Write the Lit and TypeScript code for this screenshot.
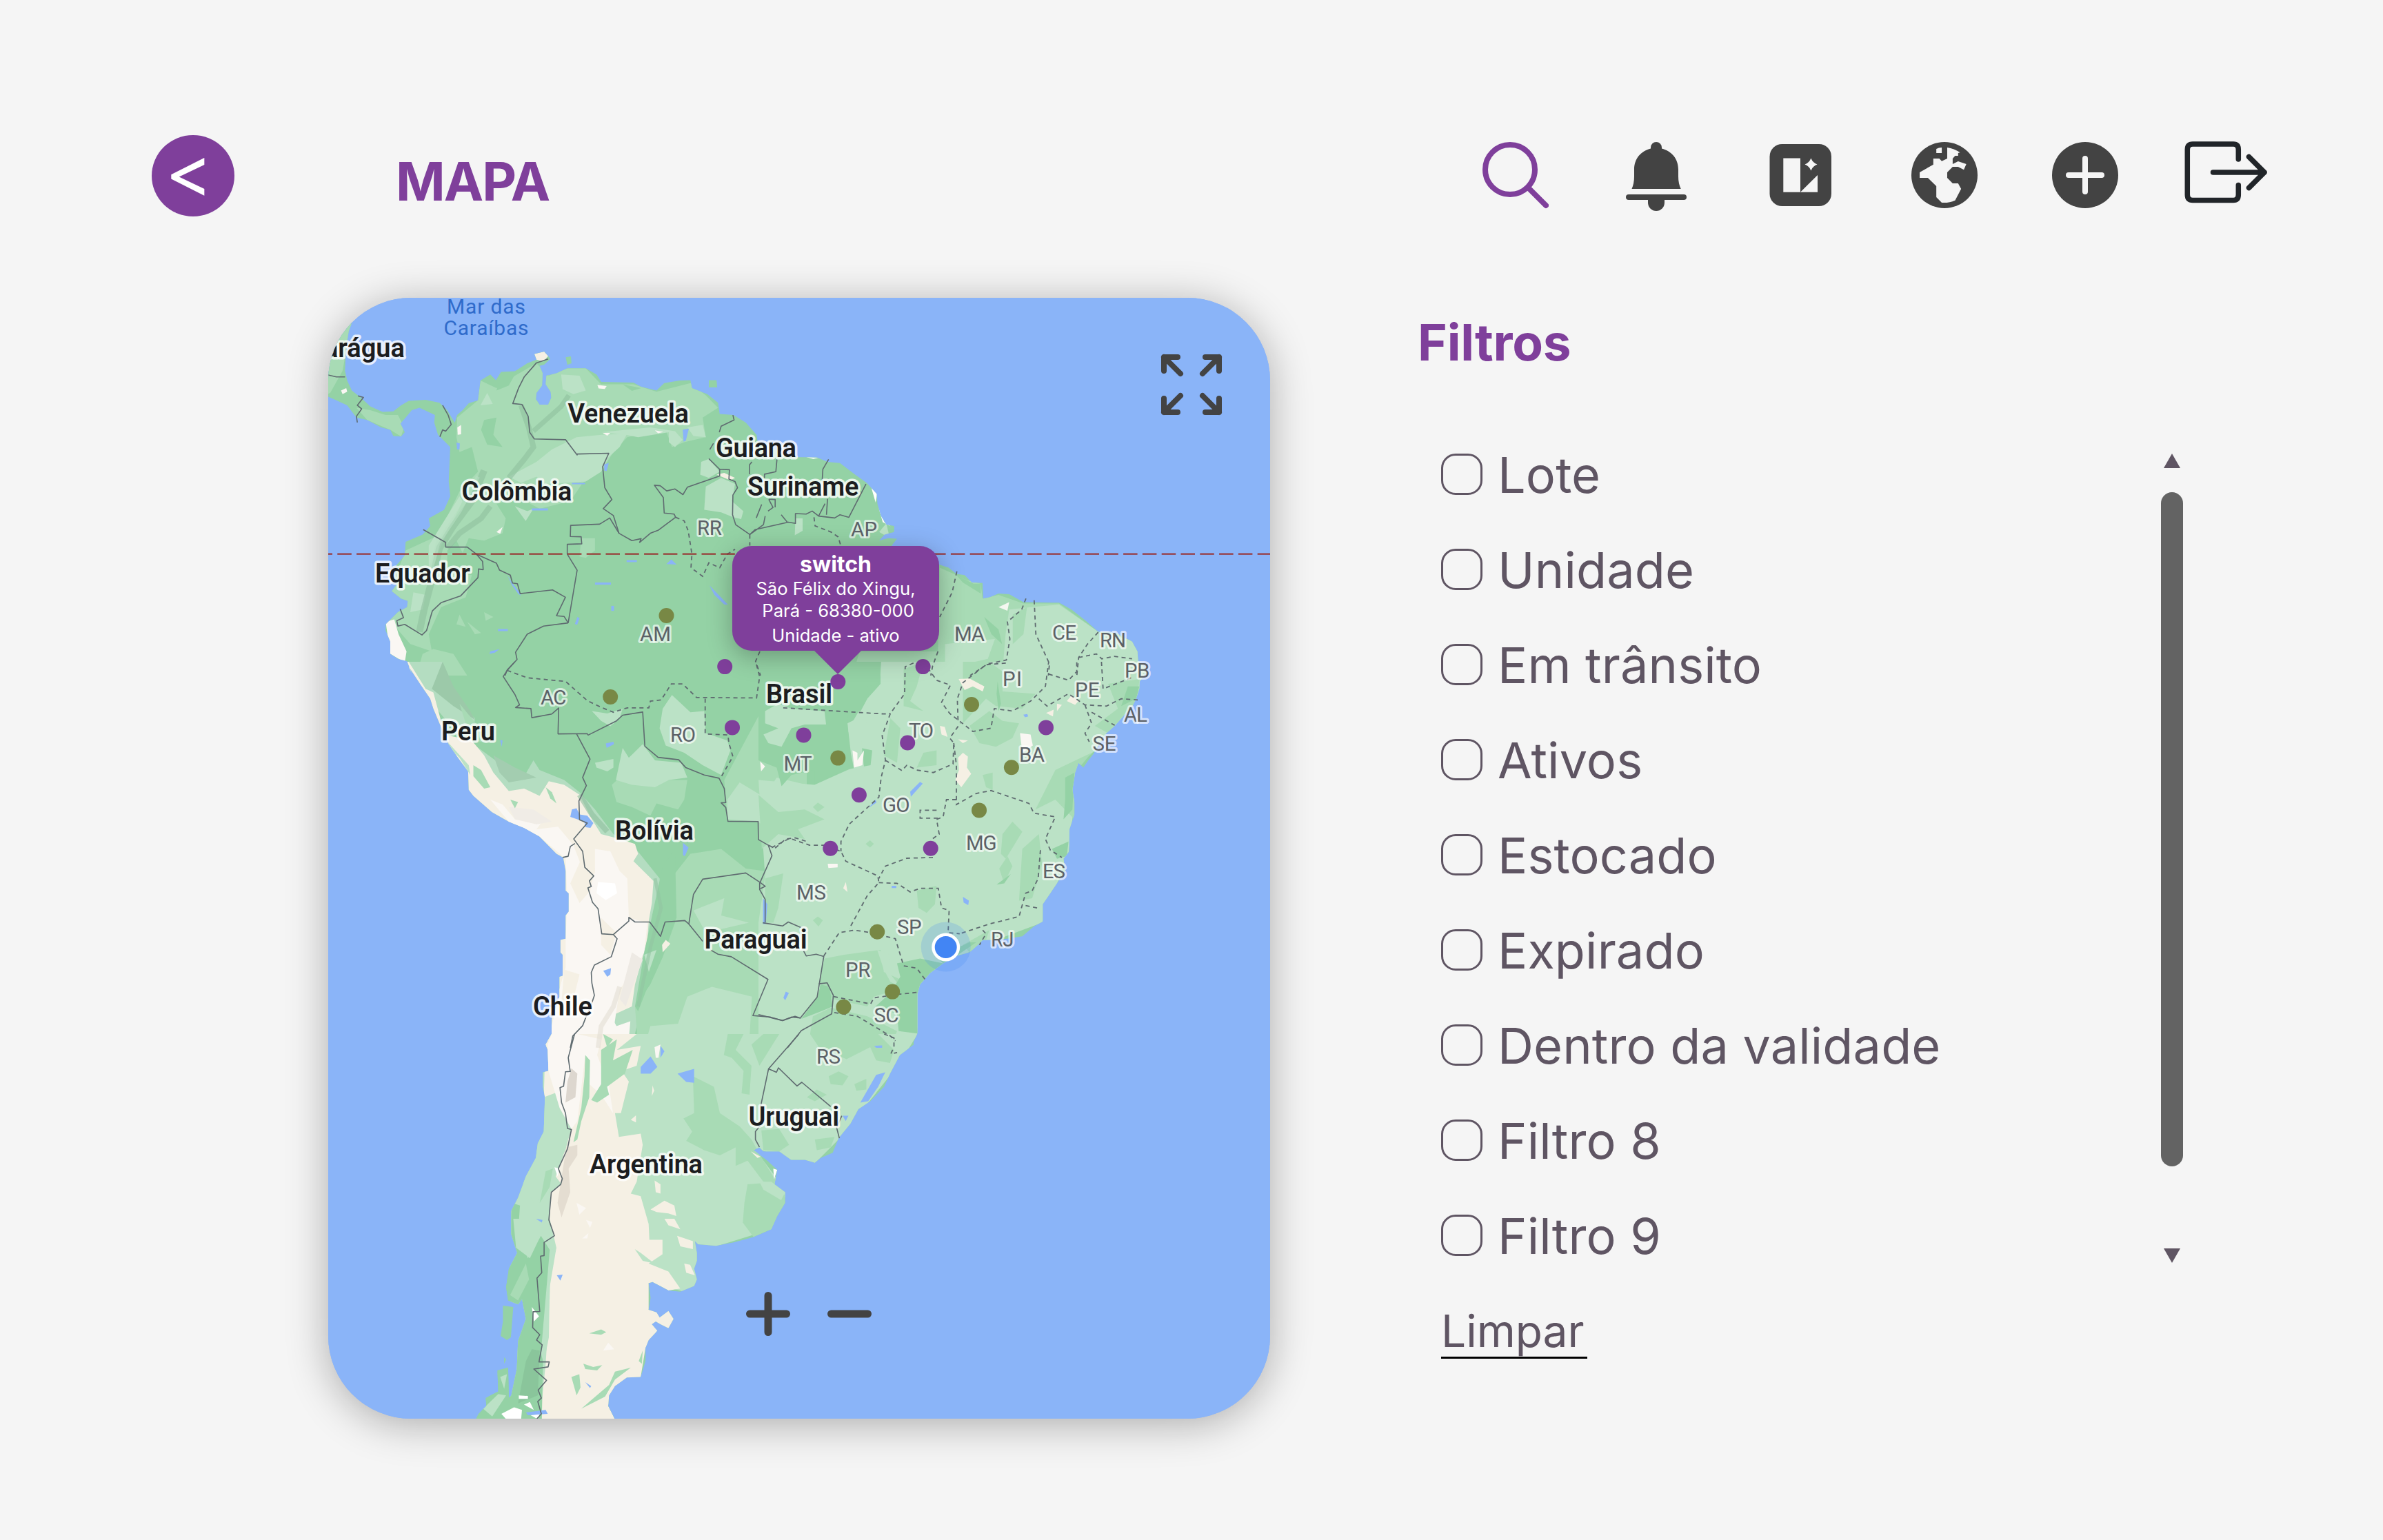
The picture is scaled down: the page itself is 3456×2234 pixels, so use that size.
import { LitElement, html, svg, css } from "lit";
import { customElement } from "lit/decorators.js";

/* ---------- map geometry ---------- */

// Every map sheet has an origin and a scale that lead to page units.
type Sheet = (points: string) => string;
const sheet =
  (ox: number, oy: number, sx: number, sy: number): Sheet =>
  (points) =>
    points
      .trim()
      .split(/\s+/)
      .map((p) => {
        const [x, y] = p.split(",").map(Number);
        return `${(ox + x * sx).toFixed(1)},${(oy + y * sy).toFixed(1)}`;
      })
      .join(" ");

const nw = sheet(470, 420, 0.44643, 0.35714);
const ne = sheet(1040, 420, 0.51658, 0.35714);
const we = sheet(470, 960, 0.44643, 0.35714);
const ea = sheet(1100, 960, 0.4783, 0.35714);
const so = sheet(470, 1500, 0.57398, 0.38265);

const DARK = "#94d2a5";
const MID = "#a8dbb5";
const LIGHT = "#bbe2c6";
const SAND = "#f5f0e4";
const SNOW = "#faf7f3";
const SEA = "#8ab4f8";

const coast = [
  nw(`0,120 90,135 80,170 75,210 70,260 68,330 75,370 90,410 120,440 150,475 190,497 225,495 250,470 275,452 330,448 375,460 400,490 412,515 425,540 432,510 450,490 470,462 500,450 508,370 540,345 558,368 575,335 620,332 660,300 690,285 683,262 715,252 728,270 735,282 715,305 700,310 710,340 708,390 690,420 688,445 700,468 728,468 738,440 736,415 720,385 722,350 755,340 790,320 850,320 885,345 900,375 1005,378 1030,395 1080,410 1105,380 1155,370 1190,368 1195,400 1245,425 1280,460 1285,505 1330,510 1370,540 1405,590`),
  ne(`113,615 150,640 200,680 280,682 310,700 345,705 390,755 420,785 448,830 450,870 460,920 475,955 497,960 497,985 470,995 455,1020 480,1010 505,1012 490,1040 540,1070 625,1118 650,1130 672,1155 695,1160 715,1190 745,1192 747,1255 765,1250 790,1235 820,1238 860,1270 960,1272 995,1300 1035,1345 1070,1390 1120,1395 1165,1430 1180,1470 1182,1510`),
  ea(`1165,10 1178,40 1156,80 1155,110 1145,150 1130,190 1110,215 1080,260 1055,290 1030,340 1015,375 1000,400 985,430 970,410 960,450 952,520 958,570 958,620 943,680 942,770 925,800 930,850 900,910 862,985 862,1055 835,1075 800,1115 730,1130 680,1130 665,1150 640,1180 600,1195 560,1225 520,1265 490,1310 482,1350 482,1510 470,1545`),
  so(`1490,40 1455,80 1430,150 1415,200 1380,255 1350,285 1330,340 1300,395 1285,450 1255,470 1240,488 1215,477 1180,477 1150,445 1110,445 1100,430 1085,440 1120,480 1145,515 1138,570 1165,600 1165,640 1145,690 1130,740 1085,770 1035,790 990,803 945,797 937,785 942,830 942,860 935,890 942,930 935,955 900,977 870,972 830,940 820,945 825,1000 820,1045 840,1055 848,1075 870,1050 883,1080 870,1115 850,1100 838,1090 828,1100 842,1125 820,1160 812,1190 812,1240 800,1300 765,1302 735,1335 720,1370 718,1410 738,1470 380,1470 390,1440 410,1410 408,1380 440,1355 438,1275 465,1265 467,1380 473,1370 487,1270 490,1165 510,1080 500,1005 490,1025 465,1010 460,960 467,890 488,830 473,760 473,670 490,620 510,540 535,470 540,415 555,370 558,240 553,200 553,145 567,140 565,60 560,40 575,0`),
  we(`740,1450 765,1360 765,1280 775,1275 775,1190 768,1180 768,1130 785,1125 785,1030 795,1015 795,940 785,930 785,850 777,795 755,780 700,710 650,675 600,650 545,610 485,545 470,520 468,445 435,390 405,335 375,250 355,190 345,150 315,95 275,20`),
  nw(`285,1560 270,1510 240,1500 215,1480 215,1430 200,1385 200,1360 240,1310 270,1290 272,1265 250,1255 220,1225 235,1200 228,1180 235,1120 262,1080 265,1025 320,995 345,960 340,930 390,895 410,840 405,780 410,640 370,590 358,540 360,510 310,480 285,490 265,520 248,545 262,580 250,597 225,595 215,570 185,560 140,530 105,520 75,470 40,450 0,428`),
].join(" ");

const isles = [
  nw("785,275 802,272 804,300 790,306"),
  nw("1250,368 1275,368 1277,398 1250,398"),
  so("452,1030 478,1035 472,1150 462,1160 446,1145 452,1090"),
  so("455,1225 460,1235 455,1250"),
];

const patches: [string, string][] = [
  // north-west highlands
  [MID, nw(`0,120 90,140 70,260 60,330 20,420 0,430`)],
  [MID, nw(`105,480 150,490 200,510 240,510 260,560 250,597 215,570 140,530`)],
  [SNOW, nw(`55,410 72,400 75,415 60,425`)],
  [MID, nw(`430,600 432,520 500,450 508,370 560,400 620,350 690,300 730,350 790,320 850,320 900,385 1005,385 1080,415 1190,380 1240,430 1280,480 1230,520 1240,600 1170,620 1130,640 1110,570 1060,580 985,600 940,660 900,740 840,785 800,860 700,890 640,850 560,870 590,930 580,990 520,1020 470,1010 450,1070 430,1020 400,1060 400,1150 480,1160 460,1250 380,1290 340,1400 350,1470 280,1440 210,1340 215,1220 265,1060 370,1000 440,820 500,740 480,640 440,660`)],
  [DARK, nw(`520,530 560,520 550,590 580,640 530,630 510,570`)],
  [DARK, nw(`575,340 620,345 600,390 560,410`)],
  [DARK, nw(`970,385 1030,400 1000,412`)],
  [LIGHT, nw(`600,760 690,700 740,650 820,600 900,590 985,585 960,640 925,680 900,740 850,780 720,790 690,760 640,785`)],
  [LIGHT, nw(`770,345 830,350 850,410 810,425 775,405`)],
  [LIGHT, nw(`508,470 530,420 548,465`)],
  [LIGHT, nw(`620,880 660,900 680,890 655,940`)],
  [LIGHT, nw(`900,580 1060,560 1140,575 1165,610 1140,640 1120,620 1120,580 1020,600 980,590`)],
  [LIGHT, nw(`1180,560 1230,550 1240,600 1200,595`)],
  [SNOW, nw(`888,388 918,392 912,404 892,402`)],
  [SNOW, nw(`905,582 930,582 920,594`)],
  [SNOW, nw(`1075,572 1102,578 1085,584`)],
  [SNOW, nw(`433,560 445,550 445,588 434,590`)],
  [SNOW, nw(`560,985 580,965 572,992`)],
  [LIGHT, nw(`1240,800 1290,765 1335,790 1325,860 1362,900 1355,932 1330,925 1290,905 1235,895`)],
  [LIGHT, nw(`1225,700 1250,688 1285,740 1250,765 1222,752`)],
  [SAND, nw(`1275,752 1300,745 1335,765 1320,775`)],
  [MID, nw(`835,1010 880,1010 880,1060 850,1090 830,1085`)],
  [MID, nw(`430,1360 440,1320 460,1370`)],
  [MID, nw(`520,1310 550,1330 525,1345`)],
  [MID, nw(`465,1350 510,1395 490,1400`)],
  [MID, nw(`355,1460 420,1480 465,1568 300,1568 320,1480`)],
  [SAND, nw(`683,262 715,252 728,270 712,292 690,285`)],
  [SNOW, nw(`200,1350 228,1340 242,1400 268,1470 262,1515 215,1480`)],
  [LIGHT, nw(`340,1040 420,880 440,840 450,860 380,1040 340,1170`)],
  [LIGHT, nw(`290,1230 330,1240 320,1300 280,1310`)],
  // north coast
  [LIGHT, ne(`455,985 475,950 485,1010`)],
  [LIGHT, ne(`220,930 240,930 240,980 218,998`)],
  ["#ffffff", ne(`432,800 450,825 445,865 438,830`)],
  ["#ffffff", ne(`453,885 470,945 488,962 465,945`)],
  ["#ffffff", ne(`250,680 285,683 270,688`)],
  [MID, ne(`625,1130 672,1160 700,1180 740,1195 745,1255 790,1240 860,1275 960,1275 1070,1390 1180,1430 1185,1568 380,1568 400,1470 620,1470`)],
  [DARK, ne(`672,1160 720,1195 740,1195 740,1235 690,1190`)],
  [LIGHT, ne(`820,1300 880,1290 960,1280 1070,1390 1180,1430 1185,1568 800,1568 810,1400`)],
  [LIGHT, ne(`640,1440 780,1420 760,1500 640,1540`)],
  [MID, ne(`830,1320 870,1290 860,1400 830,1440`)],
  [DARK, ne(`750,1330 790,1380 800,1440 770,1400`)],
  ["#f4f7f0", ne(`790,1290 820,1270 815,1305`)],
  // western slope and altiplano
  ["#b4ddc1", we(`240,0 385,0 400,80 440,170 490,230 480,330 545,390 600,440 655,455 680,400 700,440 780,480 830,530 880,600 940,700 1000,740 1090,880 1100,1000 1060,1180 1030,1400 1000,1568 600,1568 700,700`)],
  ["#9cc9a9", we(`385,0 420,100 470,190 490,235 420,180 350,110`)],
  ["#a3cdb0", we(`550,380 620,430 690,470 600,490 570,450`)],
  [MID, we(`440,170 500,260 530,330 490,320 460,250`)],
  [SAND, we(`240,0 275,0 330,110 355,125 380,240 405,300 480,320 520,380 550,450 600,525 650,515 700,545 730,485 780,500 830,540 870,640 900,700 960,720 1010,740 1020,780 1005,810 1070,890 1065,980 1055,1050 1050,1130 1030,1220 1010,1310 1000,1400 930,1440 920,1500 900,1568 600,1568 600,700 300,400`)],
  [LIGHT, we(`385,300 405,330 470,420 475,460 440,390 400,340`)],
  [SNOW, we(`540,560 580,580 620,640 705,655 690,680 760,670 810,745 845,860 880,860 880,760 930,770 960,850 985,880 990,1040 1050,1060 1040,1180 1005,1260 960,1330 940,1500 900,1568 720,1568 745,1450 760,1350 785,1240 785,1130 790,960 785,800 700,710 600,650`)],
  ["#ffffff", we(`890,895 945,900 952,940 915,968 885,940`)],
  [SAND, we(`780,1250 830,1270 810,1370 770,1400`)],
  [SAND, we(`850,760 880,840 865,930 830,980 800,900`)],
  [SAND, we(`900,1040 950,1100 930,1190 900,1150`)],
  ["#eeeae4", we(`1000,1180 1035,1210 1000,1330 980,1400 960,1370`)],
  ["#f0ece6", we(`600,590 680,600 740,650 690,660 620,640`)],
  [MID, we(`485,420 510,440 540,510 520,515 485,465`)],
  [MID, we(`605,560 630,570 620,595`)],
  [MID, we(`720,510 740,530 755,575 735,555`)],
  [LIGHT, we(`870,200 920,210 970,190 960,230 930,262 900,240`)],
  // Bolivia
  [MID, we(`935,500 960,470 1090,480 1180,480 1170,560 1150,600 1080,575 1060,625 1000,590 950,570`)],
  [LIGHT, we(`880,410 940,395 940,430 920,445 885,430`)],
  [LIGHT, we(`948,480 970,350 990,390 1035,335 1075,400 1160,410 1180,470 1120,480 1075,510 1000,500`)],
  [LIGHT, we(`1100,190 1130,135 1190,205 1235,200 1240,290 1310,320 1320,360 1290,460 1230,420 1170,370 1110,340 1090,270`)],
  [MID, we(`1140,860 1190,780 1290,760 1370,840 1430,850 1415,900 1430,1060 1500,1060 1568,1100 1568,1568 1020,1568 1010,1400 1060,1310 1100,1200 1140,1060`)],
  [DARK, we(`1100,830 1140,760 1145,1040 1100,1150 1070,1260 1020,1420 1010,1400 1040,1180`)],
  [SAND, we(`1098,1150 1110,1130 1125,1145 1100,1180`)],
  [LIGHT, we(`1200,1010 1300,960 1290,1030 1380,1060 1240,1100`)],
  [LIGHT, we(`1040,1190 1080,1170 1055,1260`)],
  [LIGHT, we(`1180,1360 1260,1320 1390,1360 1380,1568 1040,1568 1060,1480 1150,1470`)],
  [SNOW, we(`915,1400 950,1480 995,1460 990,1530 950,1550 920,1500`)],
  // centre and east of Brazil
  [MID, we(`1300,480 1420,200 1568,190 1568,1100 1430,1060 1415,900 1455,780 1410,720 1410,650 1310,645`)],
  [LIGHT, we(`1310,560 1350,490 1430,550 1470,470 1568,500 1568,740 1480,720 1410,650 1310,640`)],
  [LIGHT, ea(`0,480 170,500 270,440 340,400 270,280 300,210 330,150 370,90 370,0 1200,0 1120,240 970,420 940,780 860,1060 660,1160 490,1310 482,1510 440,1568 0,1568 0,1060 20,870`)],
  [DARK, ea(`0,0 372,0 368,85 330,100 330,150 310,200 270,200 275,340 345,360 340,420 260,440 200,480 170,498 170,440 100,460 70,505 55,430 0,400`)],
  [LIGHT, ea(`20,200 60,170 100,190 200,200 205,255 140,255 100,270 70,345 30,330 15,295 60,270 20,250`)],
  [LIGHT, ea(`270,250 300,230 330,240 310,300 320,430 290,440 280,370`)],
  [MID, ea(`0,540 60,610 140,600 200,640 120,680 140,720 60,700 10,760`)],
  [MID, ea(`20,880 75,860 60,1000 45,1060 20,1060`)],
  [MID, ea(`440,30 500,0 480,100 460,160 500,200 440,180`)],
  [MID, ea(`400,230 430,270 420,410 380,380`)],
  [MID, ea(`500,370 540,360 540,420 480,430`)],
  [MID, ea(`620,0 700,0 740,40 740,120 840,130 800,190 720,180 690,150 620,250`)],
  [DARK, ea(`725,80 735,170 728,200 722,130`)],
  [MID, ea(`640,260 700,200 740,240 790,250 770,310 720,345 670,330`)],
  [MID, ea(`680,460 710,450 710,520 690,510`)],
  [MID, ea(`900,440 970,395 1010,370 960,450 958,640 900,560 840,600 870,520`)],
  [MID, ea(`1060,90 1156,70 1145,160 1060,290 1020,260 1090,190`)],
  [DARK, ea(`1120,100 1155,100 1145,150 1100,180`)],
  [DARK, ea(`930,470 958,450 952,600 925,640 930,560`)],
  [MID, ea(`740,700 770,650 800,690 750,800 735,780`)],
  [MID, ea(`730,840 755,790 770,830 745,900`)],
  [DARK, ea(`722,905 765,862 745,900`)],
  [MID, ea(`800,760 850,700 860,820 830,960 790,970`)],
  [DARK, ea(`890,760 940,730 935,790 905,800`)],
  [MID, ea(`480,930 540,910 535,985 510,1020 485,1000`)],
  [MID, ea(`165,590 180,572 200,590 180,610`)],
  [MID, ea(`325,740 338,725 350,740 338,755`)],
  [MID, ea(`165,1050 180,1035 195,1050 182,1075`)],
  [MID, ea(`200,1205 260,1190 370,1170 380,1260 430,1290 400,1340 350,1360 330,1400 225,1370 185,1300`)],
  [LIGHT, ea(`360,1170 400,1190 395,1260 430,1320 400,1300 380,1250`)],
  [DARK, ea(`420,1225 490,1205 560,1225 520,1265 490,1310 482,1350 482,1510 425,1500 420,1430 355,1400 400,1345 430,1280`)],
  [DARK, ea(`188,1310 215,1320 225,1400 190,1420 130,1450 180,1360`)],
  [MID, ea(`165,1440 220,1405 330,1440 420,1500 400,1568 150,1568`)],
  [MID, ea(`620,1150 700,1090 690,1130 640,1180`)],
  [DARK, ea(`540,1200 640,1140 660,1140 600,1195 560,1225`)],
  [SAND, ea(`607,70 640,68 685,100 680,120 650,100 625,115`)],
  [SAND, ea(`935,160 950,135 970,160 960,175`)],
  [SAND, ea(`905,170 920,175 905,200`)],
  [SAND, ea(`872,208 895,195 893,222`)],
  [SNOW, ea(`793,290 825,295 832,340 800,370`)],
  [SAND, ea(`550,260 565,265 573,305 555,295`)],
  [SAND, ea(`605,390 620,370 635,385 632,430 645,455 615,510 597,480 608,440`)],
  [SAND, ea(`605,315 635,320 620,330`)],
  [SNOW, ea(`285,360 300,370 300,400 320,360 315,420 290,430`)],
  [SNOW, ea(`210,820 240,820 240,835 212,838`)],
  [SAND, ea(`257,920 265,895 270,935`)],
  [SNOW, ea(`5,405 20,425 8,445`)],
  // southern cone
  [LIGHT, so(`540,0 1500,0 1450,120 1300,400 1240,490 1180,480 1085,430 1170,600 1130,740 980,810 930,985 820,940 560,1470 470,1470 470,600`)],
  [SAND, so(`560,0 790,0 740,60 800,45 790,120 752,140 770,180 760,240 750,300 735,300 745,390 800,378 805,420 790,560 775,605 800,615 820,720 822,780 855,780 855,835 820,870 870,900 900,965 870,972 830,940 820,945 820,1045 890,1050 883,1110 842,1125 812,1190 800,1300 735,1335 718,1410 738,1470 545,1470 560,1250 570,1000 572,850 587,810 570,700 572,600 600,570 580,530 610,440 625,350 590,290 555,240`)],
  [LIGHT, so(`555,240 590,220 610,300 625,360 600,480 570,600 530,640 500,560 540,400`)],
  [SNOW, so(`575,0 640,0 700,20 690,80 720,200 730,300 700,230 670,190 660,80 640,330 625,360 595,280 565,130 565,40`)],
  ["#ddd7cf", so(`625,130 640,150 635,240 610,260 615,180`)],
  [MID, so(`660,80 672,100 670,240 650,330 640,400 630,410 650,280 658,160`)],
  [MID, so(`700,60 740,20 730,100 780,60 760,150 715,200 720,230 690,260 675,250 700,190`)],
  [MID, so(`705,0 730,20 715,50`)],
  ["#e4ddd1", so(`612,430 640,420 640,460 618,510 622,600 600,695 590,640`)],
  ["#ffffff", so(`582,505 595,510 590,540`)],
  [DARK, so(`475,640 495,650 490,760 515,850 548,765 575,830 568,900 555,1100 550,1470 380,1470 410,1400 440,1270 440,1030 460,900`)],
  [LIGHT, so(`478,700 530,700 555,740 520,850 485,810`)],
  [MID, so(`470,990 510,870 518,930 490,1010`)],
  [LIGHT, so(`570,820 587,810 570,960 568,1150 555,1250 548,1210`)],
  ["#8ac59b", so(`510,1240 525,1195 545,1200 540,1370 490,1400`)],
  [LIGHT, so(`445,1300 462,1290 455,1345`)],
  [LIGHT, so(`402,1420 440,1365 460,1370 425,1450`)],
  ["#ffffff", so(`448,1440 480,1415 500,1425 498,1460 460,1460`)],
  ["#ffffff", so(`522,1445 545,1440 540,1460`)],
  ["#ffffff", so(`492,1370 515,1372 515,1383 492,1383`)],
  ["#ffffff", so(`505,1405 520,1395 530,1425`)],
  ["#ffffff", so(`525,1035 543,1070 530,1090`)],
  [MID, so(`560,520 578,510 570,580 545,640`)],
  [MID, so(`932,160 985,200 1000,300 1050,350 1080,400 1110,480 1160,600 1110,560 1070,480 1040,500 1040,430 1000,460 960,440 915,405 930,370 908,320 935,300`)],
  [MID, so(`1070,570 1110,565 1165,610 1165,640 1130,740 1085,770 1058,715 1062,640`)],
  [LIGHT, so(`1100,560 1130,560 1165,600 1155,630 1110,590`)],
  [MID, so(`1020,0 1060,0 1040,60 1080,120 1075,230 1055,225 1060,140 1030,90 1010,80`)],
  [MID, so(`1080,40 1110,0 1150,0 1100,120`)],
  [MID, so(`1228,0 1400,0 1440,60 1430,110 1395,100 1380,50 1320,95 1250,50`)],
  [MID, so(`1275,160 1300,142 1325,160 1310,195 1280,190`)],
  [MID, so(`1340,190 1370,170 1370,210 1345,215`)],
  [MID, so(`1220,240 1245,210 1270,230 1240,255`)],
  [MID, so(`1105,365 1150,360 1175,420 1150,445 1110,440`)],
  [MID, so(`1240,400 1290,390 1280,430 1245,440`)],
  [MID, so(`670,1135 700,1120 713,1130 700,1140`)],
  [MID, so(`655,1250 680,1262 703,1255 690,1275 660,1270`)],
  [MID, so(`625,1300 645,1290 648,1340 638,1370`)],
  [MID, so(`650,1420 720,1330 735,1280 775,1265 735,1310 710,1375`)],
  [MID, so(`795,1240 805,1200 803,1250`)],
  [LIGHT, so(`785,815 800,830 835,870 805,860`)],
  [SAND, so(`825,665 860,632 885,650 890,690 870,680 840,675`)],
  [SAND, so(`860,700 885,700 900,740 870,725`)],
  [SAND, so(`892,765 932,785 932,815 900,805`)],
  [SAND, so(`910,870 925,875 937,915 915,905`)],
  [SAND, so(`835,555 850,570 850,605 838,600`)],
  [SAND, so(`775,325 788,308 788,335`)],
  [SAND, so(`828,235 830,195 834,215`)],
  [SAND, so(`1078,445 1103,465 1095,470`)],
  [SNOW, so(`638,640 662,660 645,685`)],
  [SNOW, so(`662,705 678,712 672,735`)],
  [SNOW, so(`705,1200 718,1170 733,1195`)],
  [SNOW, so(`652,775 668,755 665,775`)],
  [SNOW, so(`835,50 850,40 845,90 838,90`)],
  ["#ffffff", so(`1135,510 1145,515 1137,550`)],
];

const lakes = [
  we(`805,600 820,595 830,620 855,625 875,655 865,675 850,672 845,650 800,630`),
  we(`907,1255 932,1245 930,1270 920,1280`),
  we(`1166,735 1184,755 1172,790 1166,785`),
  we(`915,332 940,325 942,335 918,350`),
  we(`572,318 580,320 577,345`),
  we(`1500,1340 1510,1345 1498,1375 1492,1365`),
  we(`1426,960 1440,985 1435,1065 1426,1065`),
  ea(`490,488 498,495 462,548 460,528`),
  ea(`620,955 638,970 636,988 622,978`),
  ea(`355,560 358,572 335,592`),
  ea(`404,910 418,910 418,919 404,919`),
  ea(`803,215 815,212 818,222 808,225`),
  so(`800,125 825,85 842,125 825,150 800,150`),
  so(`893,150 935,132 935,185 915,182`),
  so(`850,45 860,65 850,90`),
  so(`1395,155 1418,145 1400,200 1375,255 1355,260`),
  so(`1390,45 1410,43 1410,52 1395,52`),
  so(`588,915 603,912 597,935`),
  so(`660,1320 675,1335 672,1342`),
  so(`510,1435 560,1425 565,1440 515,1445`),
  so(`535,700 552,705 550,715`),
  so(`1310,310 1325,310 1318,330`),
  nw(`1165,570 1185,565 1175,615 1168,618`),
  nw(`910,710 925,705 918,738 910,735`),
  nw(`430,622 441,625 440,650 432,650`),
  nw(`1112,1115 1128,1096 1145,1117`),
  nw(`805,785 848,785 848,791 805,791`),
  nw(`675,889 727,889 727,897 675,897`),
  nw(`880,1190 932,1190 932,1199 880,1199`),
  nw(`983,1099 1016,1099 1016,1107 983,1107`),
  nw(`1252,1202 1312,1280 1300,1280 1268,1240`),
  nw(`595,1160 610,1190 632,1225 640,1245 630,1235 610,1200`),
  nw(`565,1379 597,1379 597,1387 565,1387`),
  nw(`540,1470 570,1460 555,1475 537,1480`),
  nw(`933,1285 942,1285 942,1305 933,1305`),
  nw(`823,1330 830,1335 822,1362 815,1358`),
];

const ridges: [string, string, number][] = [
  ["#8fbf9e", nw(`795,430 770,475 730,520 680,575`), 7],
  ["#8fbf9e", nw(`640,470 665,560 680,640 650,690 600,765`), 8],
  ["#8fbf9e", nw(`540,880 510,930 440,990 400,1050`), 8],
  ["#8fbf9e", nw(`520,735 480,860 420,960 375,1050 350,1180 325,1300 310,1390`), 10],
  ["#b6e0c2", nw(`500,760 440,900 370,1030 345,1150`), 6],
  ["#8fbf9e", we(`830,540 870,620 920,690`), 8],
  ["#e2ddd4", we(`960,1320 940,1400 900,1480 890,1568`), 7],
  ["#93c4a2", we(`1075,880 1095,1000 1060,1160 1020,1400`), 5],
];

const borders = [
  nw(`13,347 40,355 68,355`),
  nw(`110,432 128,438 108,470 122,485 105,515 108,540`),
  nw(`385,470 403,510 413,548 395,575 385,570 376,598`),
  nw(`728,282 690,298 650,355 632,400 613,463 643,467 663,515 668,580 683,607 785,610 822,672 822,668 925,665 905,720 912,805 935,853 907,890 940,918 958,990`),
  nw(`322,975 395,1027 395,1046 465,1046 495,1075 560,1112 570,1140 605,1160 612,1192 628,1195 637,1235 742,1220 784,1250 755,1325 780,1328 793,1354`),
  nw(`495,1075 515,1105 517,1138 502,1135 500,1170 443,1245 380,1272 352,1305 333,1385 318,1403 262,1360 240,1367 236,1345 258,1333 247,1297`),
  nw(`793,1354 822,1140 790,1075 790,1035 837,1033 835,1004 800,1003 801,958 895,953 928,928 958,990 1000,1020 1030,1012 1025,1027 1060,990 1085,978 1142,925 1137,912 1105,908 1102,845 1073,795 1092,797 1113,818 1140,810 1166,833 1180,803 1285,757 1285,730 1250,687`),
  nw(`793,1354 713,1367 660,1400 622,1473 627,1503 595,1545 588,1568`),
  nw(`1328,510 1332,530 1290,555 1284,580`),
  nw(`1265,625 1253,650`),
  nw(`1285,730 1317,732 1315,770 1335,780 1343,805 1328,835 1327,915 1337,955 1383,995`),
  nw(`1390,700 1382,712 1382,750`),
  ne(`168,690 165,740 133,750 133,765`),
  ne(`313,690 297,730 295,775`),
  ne(`418,790 370,925 345,915 330,928 285,920 303,870`),
  ne(`310,850 307,915`),
  ne(`145,852 163,853 163,885`),
  ne(`145,852 157,885 143,900`),
  ne(`125,873 110,928`),
  ne(`180,915 197,945`),
  ne(`135,920 130,955 92,995 107,975 200,945 220,950 220,910 250,912 267,900 285,920`),
  we(`620,0 595,35 582,60 620,133 635,175 622,186 672,190 675,227 740,212 762,188 760,293 855,292 858,298 950,240 970,217 1035,204 1042,343 1085,388 1152,398 1175,430 1235,460 1283,473 1300,515 1305,572 1290,573 1305,592 1312,648 1410,649 1411,722 1443,745 1455,788 1415,900 1415,925 1433,965 1433,1058`),
  we(`820,292 864,395 840,470 852,503 828,565 830,642 855,655 811,720 840,770 847,835 876,870 862,890 868,913 857,918 872,977 890,1003 902,1105 940,1108 990,1053 990,1038 1010,1057 1058,1057 1093,1115 1108,1057 1172,1051 1185,1065 1230,1135`),
  we(`775,795 793,790 800,750 815,738`),
  we(`940,1108 952,1125 933,1198 878,1232 868,1262 870,1305 878,1355 866,1400 850,1445 840,1478 808,1520 800,1568`),
  we(`1185,1065 1200,945 1230,883 1370,858 1415,895 1433,912 1417,922`),
  we(`1425,1060 1490,1073 1508,1057 1550,1080`),
  we(`1255,1170 1280,1188 1323,1198 1442,1290 1393,1437 1450,1443 1490,1457 1530,1440 1548,1448`),
  ea(`137,1175 145,1195 175,1188 198,1197 178,1362 127,1447 100,1443 72,1457 0,1433`),
  ea(`183,1308 208,1304 227,1355 222,1430 130,1498 88,1568`),
  so(`1200,0 1123,132 1103,275`),
  so(`1123,132 1143,145 1148,128 1195,197 1207,183 1280,275`),
  so(`1103,345 1090,370 1090,400 1100,428`),
  so(`1308,310 1295,355 1302,395`),
  so(`633,0 617,90 622,142 610,143 605,198 596,203 600,260 610,300 615,358 625,362 615,435 592,510 602,548 598,570 574,600 568,705 582,765 556,790 556,840 547,842 550,905 538,925 545,1052 528,1053 527,1113 545,1140 537,1160 551,1178 543,1243 569,1243 566,1262 530,1270 562,1313 541,1350 549,1380 540,1393 549,1440 537,1460`),
];

const stateLines = [
  nw(`1142,925 1170,940 1183,980 1195,1075 1192,1130 1230,1165 1250,1110 1285,1130 1310,1075 1335,1055`),
  nw(`1383,995 1383,1040`),
  ne(`272,925 275,960 320,985 340,1005 347,1040`),
  ne(`673,1145 660,1230 625,1330`),
  ne(`867,1255 855,1300 815,1350 822,1420 812,1505 760,1520 710,1568`),
  ne(`890,1262 895,1400 933,1520 930,1568`),
  ne(`1070,1392 1040,1440 1015,1495 1010,1568`),
  ne(`1015,1495 1065,1480 1080,1500 1115,1490 1165,1500`),
  ne(`120,1470 108,1510 122,1568`),
  ne(`620,1470 605,1530 600,1568`),
  we(`595,35 660,65 785,80 855,158 900,185 940,205 985,187 1055,187 1060,160 1095,155 1128,90 1165,90 1210,145 1405,147 1415,60 1402,0`),
  we(`1238,150 1238,293 1312,297 1315,330 1328,385 1290,468`),
  we(`1443,745 1465,757 1500,720 1530,715 1568,730`),
  ea(`75,187 380,212 400,210`),
  ea(`470,5 445,20 443,130 400,210 375,300 385,400 372,470 365,550 275,660 250,730 250,770`),
  ea(`385,400 435,442 450,420 480,440 530,450 590,415 592,330 580,310 612,250`),
  ea(`500,0 540,75 582,95 555,165 580,210 650,283 705,270 715,190 770,200 825,160 870,100 880,0`),
  ea(`750,5 690,12 620,85 603,150 605,240`),
  ea(`592,330 600,420 600,580 660,535 705,523 820,575 835,615 900,630 870,720 885,765 920,795`),
  ea(`600,560 570,560 560,630 540,640 548,700 527,720 527,795 450,798 385,830 365,880`),
  ea(`540,603 490,603 490,635 550,635`),
  ea(`40,755 95,717 155,745 200,745 250,770 265,810 362,870 365,897 330,950 275,1085`),
  ea(`365,897 420,900 460,935 490,920 545,920 555,1000 578,1010 575,1100 610,1105`),
  ea(`198,1195 245,1100 290,1090 340,1100 415,1125 440,1235 480,1245 505,1290`),
  ea(`228,1360 340,1390 350,1365 430,1350 480,1343`),
  ea(`230,1425 300,1440 400,1520 415,1540`),
  ea(`855,765 848,880 830,930 810,940 790,1035 700,1065 610,1105`),
  ea(`810,990 845,1000`),
  ea(`680,1090 690,1105 670,1150`),
  ea(`850,150 875,180 940,130 990,175 1055,180 1100,150 1150,155`),
  ea(`880,50 940,75 965,40 965,0`),
  ea(`1040,0 1045,110 1130,65`),
  ea(`990,175 1010,250 990,290 1003,325`),
  ea(`1010,205 1080,258`),
  so(`1415,0 1440,15 1440,50 1432,75 1448,70`),
];

/* text, left, right, baseline */
type Label = [string, number, number, number];
const countries: Label[] = [
  ["Venezuela", 823.6, 999, 613],
  ["Colômbia", 669.5, 829.5, 726],
  ["Equador", 544, 682, 844.5],
  ["Guiana", 1038, 1155, 663],
  ["Suriname", 1084, 1245.5, 718.5],
  ["Peru", 640, 718, 1074],
  ["Brasil", 1111, 1207, 1019.5],
  ["Bolívia", 892, 1006, 1217.5],
  ["Paraguai", 1021.5, 1170.5, 1376],
  ["Chile", 773, 859, 1472.5],
  ["Uruguai", 1085.5, 1217, 1633],
  ["Argentina", 855, 1019, 1701.5],
];
const states: Label[] = [
  ["RR", 1011, 1047, 776],
  ["AM", 928, 973, 929.5],
  ["AP", 1234, 1272, 777.5],
  ["MA", 1384, 1428, 930],
  ["CE", 1526, 1561, 928],
  ["RN", 1595, 1633, 938.5],
  ["PB", 1631, 1667.5, 982.5],
  ["PI", 1454, 1482, 995],
  ["PE", 1559, 1594.5, 1011],
  ["AL", 1630, 1664, 1047],
  ["SE", 1584.5, 1618.5, 1088.5],
  ["BA", 1478, 1515, 1105],
  ["TO", 1318, 1354, 1069.5],
  ["AC", 784, 821.5, 1022],
  ["RO", 972, 1009, 1075.5],
  ["MT", 1136.5, 1177.5, 1117.5],
  ["GO", 1280, 1319.5, 1178],
  ["MG", 1401, 1445.5, 1232.5],
  ["MS", 1155, 1198, 1305],
  ["ES", 1512, 1545, 1274],
  ["SP", 1301, 1336.5, 1355],
  ["RJ", 1437, 1470.5, 1373],
  ["PR", 1226, 1262.5, 1416.5],
  ["SC", 1267.5, 1303.5, 1483],
  ["RS", 1184, 1219, 1542.5],
];

const activeDots = [
  [1051.2, 967.1], [1338.6, 967.1], [1215.3, 989], [1165.5, 1066.4], [1316.2, 1077.5],
  [1517, 1055.4], [1062, 1055.4], [1245.9, 1153.2], [1204.3, 1230.7], [1349.7, 1230.7],
];
const transitDots = [
  [966.5, 893], [885.2, 1011], [1215.3, 1099.6], [1409, 1022], [1466.9, 1113.2],
  [1420, 1175.4], [1272.2, 1351.8], [1294.2, 1438.6], [1223.4, 1460.7],
];

@customElement("location-map")
export class LocationMap extends LitElement {
  static styles = css`
    :host { display: block; position: relative; width: 1366px; height: 1626px; }
    .frame {
      width: 100%; height: 100%; border-radius: 120px; overflow: hidden;
      background: #8ab4f8; box-shadow: 0 8px 60px rgba(0, 0, 0, 0.3);
    }
    .chart { display: block; width: 1366px; height: 1626px; }
    .border { fill: none; stroke: #5f6b70; stroke-width: 1.6; stroke-linejoin: round; }
    .state { fill: none; stroke: #5f6b70; stroke-width: 1.8; stroke-dasharray: 6 5; }
    .name { font-family: Roboto, sans-serif; paint-order: stroke; stroke-linejoin: round; }
    .country { font-size: 38px; font-weight: 600; fill: #1c1d20; stroke: rgba(255, 255, 255, 0.8); stroke-width: 7px; }
    .uf { font-size: 29.5px; font-weight: 400; fill: #5c6167; stroke: rgba(255, 255, 255, 0.65); stroke-width: 6px; }
    .water { font-family: Roboto, sans-serif; font-size: 30px; fill: #2f6bcb; }
    .tip {
      position: absolute; left: 586px; top: 360px; width: 300px; height: 152px; box-sizing: border-box;
      padding-top: 8px; border-radius: 28px; background: #7f3f9b; color: #fff; text-align: center;
      font-family: Inter, sans-serif; font-size: 25.6px; line-height: 32px; font-weight: 400;
      box-shadow: 0 8px 36px rgba(0, 0, 0, 0.28);
    }
    .tip-name { font-size: 32px; line-height: 38px; font-weight: 700; }
    .tip-address { white-space: pre; }
    .tip-status { line-height: 40px; }
    .tail { position: absolute; left: 118px; top: 151px; width: 70px; height: 36px; }
  `;

  render() {
    return html`
      <div class="frame">
        <svg class="chart" viewBox="476 432 1366 1626">
          <defs>
            <clipPath id="land"><polygon points=${coast}></polygon></clipPath>
          </defs>
          <rect x="476" y="432" width="1366" height="1626" fill=${SEA}></rect>
          <polygon points=${coast} fill=${DARK}></polygon>
          ${isles.map((p) => svg`<polygon points=${p} fill=${DARK}></polygon>`)}
          <g clip-path="url(#land)">
            ${patches.map(([c, p]) => svg`<polygon points=${p} fill=${c}></polygon>`)}
            ${ridges.map(([c, p, w]) => svg`<polyline points=${p} fill="none" stroke=${c} stroke-width=${w} stroke-opacity="0.6"></polyline>`)}
            ${lakes.map((p) => svg`<polygon points=${p} fill=${SEA}></polygon>`)}
          </g>
          ${borders.map((p) => svg`<polyline class="border" points=${p}></polyline>`)}
          ${stateLines.map((p) => svg`<polyline class="state" points=${p}></polyline>`)}
          <line x1="461.5" x2="1842" y1="803.6" y2="803.6" stroke="#983030" stroke-opacity="0.75" stroke-width="2.8" stroke-dasharray="20.5 7.3"></line>
          <text class="water" x="648" y="454.6" textLength="114">Mar das</text>
          <text class="water" x="643.5" y="486" textLength="123">Caraíbas</text>
          <text class="name country" x="587" y="517.5" text-anchor="end">Nicarágua</text>
          ${countries.map(([t, l, r, y]) => svg`<text class="name country" x=${l} y=${y} textLength=${r - l}>${t}</text>`)}
          ${states.map(([t, l, r, y]) => svg`<text class="name uf" x=${l} y=${y} textLength=${r - l}>${t}</text>`)}
          ${transitDots.map(([x, y]) => svg`<circle cx=${x} cy=${y} r="11" fill="#788845"></circle>`)}
          ${activeDots.map(([x, y]) => svg`<circle cx=${x} cy=${y} r="11" fill="#7f3f9b"></circle>`)}
          <circle cx="1371.7" cy="1373.6" r="36" fill="#4285f4" fill-opacity="0.2"></circle>
          <circle cx="1371.7" cy="1374" r="20.5" fill="#fff"></circle>
          <circle cx="1371.7" cy="1374" r="16" fill="#4285f4"></circle>
          <g fill="none" stroke="#434343" stroke-width="8" stroke-linecap="round" stroke-linejoin="round">
            <path d="M1708 518H1688V538M1688 518L1712 542"></path>
            <path d="M1748 518H1768V538M1768 518L1744 542"></path>
            <path d="M1708 598H1688V578M1688 598L1712 574"></path>
            <path d="M1748 598H1768V578M1768 598L1744 574"></path>
            <path stroke-width="11" d="M1087.5 1906H1140.5M1114 1879.5V1932.5M1205.5 1906H1258.5"></path>
          </g>
        </svg>
      </div>
      <div class="tip">
        <div class="tip-name">switch</div>
        <div>São Félix do Xingu,</div>
        <div class="tip-address"> Pará - 68380-000</div>
        <div class="tip-status">Unidade - ativo</div>
        <svg class="tail" viewBox="0 0 70 36"><path d="M0 0H70L35 35Z" fill="#7f3f9b"></path></svg>
      </div>
    `;
  }
}

const filters = [
  "Lote", "Unidade", "Em trânsito", "Ativos", "Estocado",
  "Expirado", "Dentro da validade", "Filtro 8", "Filtro 9",
];

@customElement("filter-panel")
export class FilterPanel extends LitElement {
  static styles = css`
    :host { display: block; font-family: Inter, sans-serif; color: #5f5563; }
    .title { margin: 0 0 0 -4px; padding-top: 21px; font-size: 73px; line-height: 88px; font-weight: 700; color: #7f3f9b; letter-spacing: -0.2px; }
    .body { display: flex; justify-content: space-between; padding-top: 79px; }
    .list { display: flex; flex-direction: column; margin: 0; padding: 0 0 0 30px; list-style: none; }
    .item { display: flex; align-items: center; gap: 22px; height: 138px; }
    .box { width: 60px; height: 60px; box-sizing: border-box; border: 3px solid #5f5563; border-radius: 21px; margin-top: -2px; }
    .label { font-size: 72px; line-height: 88px; letter-spacing: 0.13px; }
    .bar { display: flex; flex-direction: column; align-items: center; width: 32px; padding-top: 38px; }
    .arrow { width: 24px; height: 21px; fill: #5f5563; }
    .track { display: flex; height: 1097px; margin-top: 35px; }
    .thumb { width: 32px; height: 978px; border-radius: 16px; background: #636363; }
    .clear { margin: 31px 0 0 30px; border-bottom: 3px solid #000; width: 212px; font-size: 64px; line-height: 75px; }
  `;

  render() {
    return html`
      <h2 class="title">Filtros</h2>
      <div class="body">
        <ul class="list">
          ${filters.map((f) => html`<li class="item"><span class="box"></span><span class="label">${f}</span></li>`)}
        </ul>
        <div class="bar">
          <svg class="arrow" viewBox="0 0 24 21"><path d="M12 0L24 21H0Z"></path></svg>
          <div class="track"><div class="thumb"></div></div>
          <svg class="arrow" viewBox="0 0 24 21"><path d="M0 0H24L12 21Z"></path></svg>
        </div>
      </div>
      <div class="clear">Limpar</div>
    `;
  }
}

@customElement("app-root")
export class AppRoot extends LitElement {
  static styles = css`
    :host { display: block; width: 3456px; height: 2234px; overflow: hidden; background: #f5f5f5; font-family: Inter, sans-serif; }
    .top { display: grid; grid-template-columns: 350px 1580px 1fr; height: 432px; box-sizing: border-box; padding: 196px 0 0 220px; align-items: start; }
    .back { display: flex; justify-content: center; width: 120px; height: 118px; border-radius: 50%; background: #7f3f9b; color: #fff; font-size: 104px; line-height: 104px; font-weight: 400; text-indent: -12px; }
    .heading { margin: 0; padding: 20px 0 0 4px; font-size: 77px; line-height: 94px; font-weight: 700; color: #7f3f9b; letter-spacing: -2px; }
    .actions { display: grid; grid-template-columns: 208px 208px 206px 204px 192px 120px; padding-top: 9px; }
    .icon { display: block; height: 102px; }
    .content { display: grid; grid-template-columns: 1366px 1106px; column-gap: 218px; padding-left: 476px; }
  `;

  render() {
    return html`
      <header class="top">
        <div class="back">&lt;</div>
        <h1 class="heading">MAPA</h1>
        <nav class="actions">
          <svg class="icon" width="96" viewBox="2150 205 96 102" fill="none" stroke="#7f3f9b" stroke-width="8" stroke-linecap="round">
            <circle cx="2190" cy="246" r="36"></circle><path d="M2216 272L2242 298"></path>
          </svg>
          <svg class="icon" width="88" viewBox="2358 205 88 102" fill="#434343">
            <path d="M2394 215V214a8 8 0 0 1 16 0v1.500C2424 219 2434 230 2434 246V256Q2434 266 2437.700 274H2366.500Q2370 266 2370 256V246C2370 230 2380 219 2394 215.500Z"></path>
            <rect x="2358" y="282" width="88" height="8" rx="4"></rect>
            <path d="M2390 290H2414V294a12 12 0 0 1-24 0Z"></path>
          </svg>
          <svg class="icon" width="90" viewBox="2566 205 90 102">
            <rect x="2566.500" y="209" width="89.500" height="90" rx="18" fill="#434343"></rect>
            <path fill="#f5f5f5" d="M2586.300 229.500H2611V278.700H2586.300ZM2611 278.700L2636 254V278.700ZM2626.400 229.500Q2629 236 2635.500 238.600Q2629 241 2626.400 247.500Q2624 241 2617.500 238.600Q2624 236 2626.400 229.500Z"></path>
          </svg>
          <svg class="icon" width="96" viewBox="2772 205 96 102">
            <circle cx="2820" cy="254" r="48" fill="#434343"></circle>
            <g fill="#f5f5f5" transform="translate(2720 160) scale(.3954 .3333)">
              <path d="M223 168Q232 162 243 162V186H223Z"></path>
              <path d="M263 162Q288 166 310 184L303 186V198H292L283 210V234L303 222L333 234L324 259L303 246H283L263 270V294L283 318H303L314 342L292 392Q270 404 243 402L223 378V330L192 294H162V270L212 236V210H234L243 221L263 210Z"></path>
            </g>
          </svg>
          <svg class="icon" width="96" viewBox="2976 205 96 102">
            <circle cx="3024" cy="254" r="48" fill="#434343"></circle>
            <path d="M3000 254H3048M3024 230V278" stroke="#f5f5f5" stroke-width="8" stroke-linecap="round"></path>
          </svg>
          <svg class="icon" width="120" viewBox="3168 205 120 102" fill="none" stroke="#212529" stroke-width="7.500" stroke-linecap="round" stroke-linejoin="round">
            <path d="M3246.300 231V217Q3246.300 209 3239 209H3180Q3172.300 209 3172.300 217V282.500Q3172.300 290.500 3180 290.500H3239Q3246.300 290.500 3246.300 282.500V268.500"></path>
            <path d="M3209.500 250H3284M3261.500 227.500L3284 250L3261.500 272.500"></path>
          </svg>
        </nav>
      </header>
      <main class="content">
        <location-map></location-map>
        <filter-panel></filter-panel>
      </main>
    `;
  }
}
